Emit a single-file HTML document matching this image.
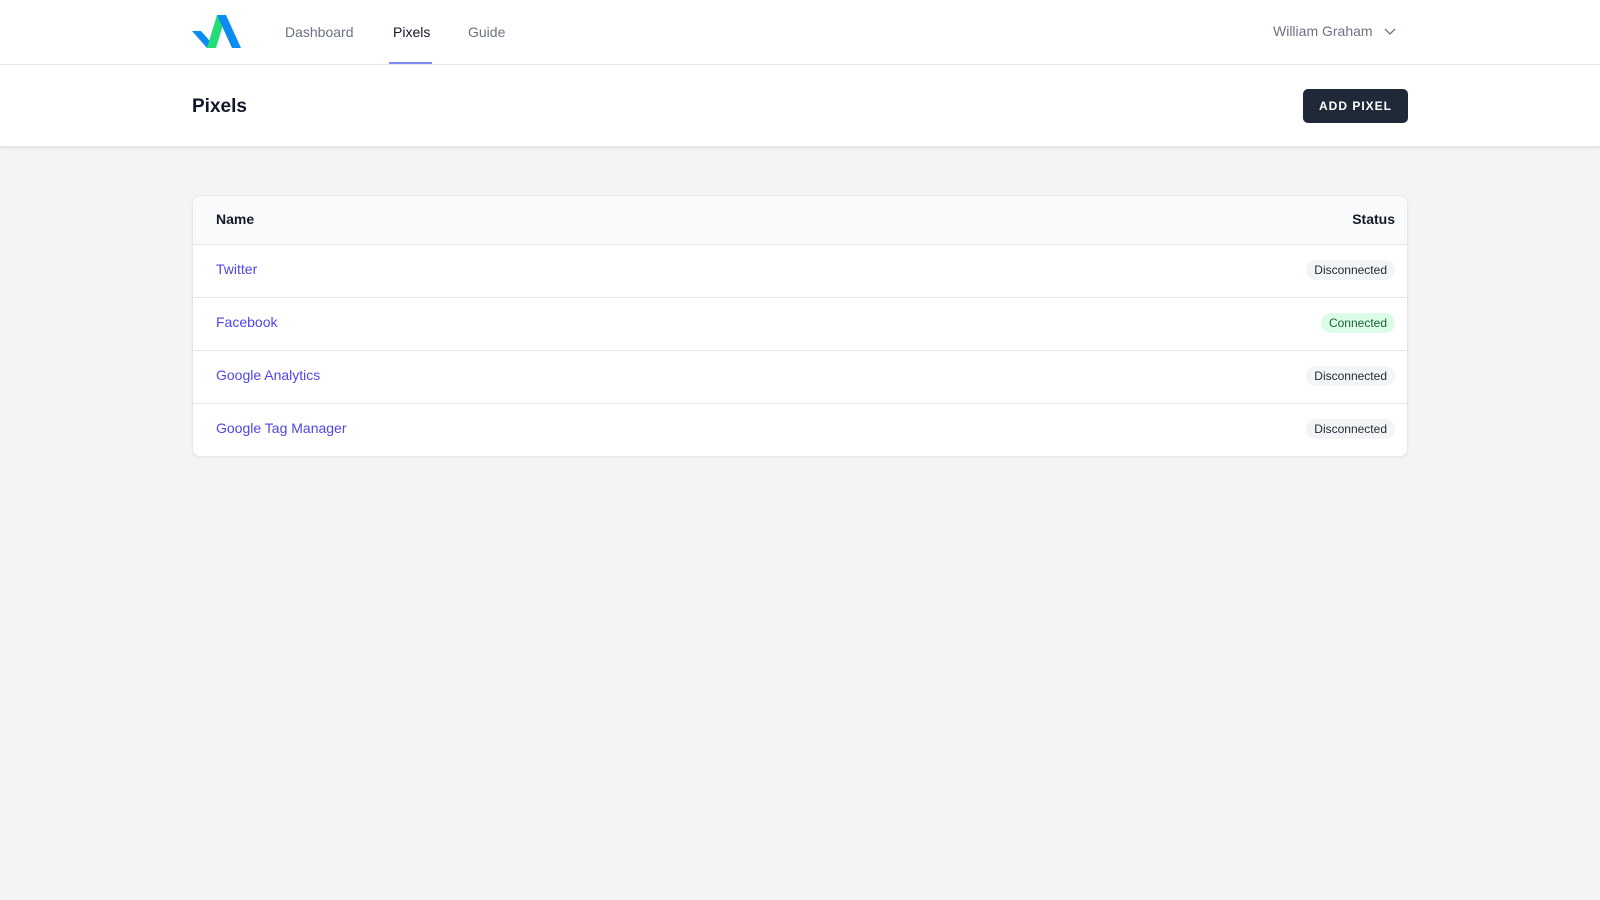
<!DOCTYPE html>
<html><head><style>
*{box-sizing:border-box;margin:0;padding:0}
body{width:1600px;height:900px;background:#f3f4f6;font-family:"Liberation Sans",sans-serif;position:relative;overflow:hidden}
.nav{position:absolute;top:0;left:0;width:1600px;height:65px;background:#fff;border-bottom:1px solid #e5e7eb}
.nav a{position:absolute;top:24px;font-size:14px;color:#6b7280;text-decoration:none}
.hdr{position:absolute;top:65px;left:0;width:1600px;height:82px;background:#fff;box-shadow:0 1px 2px rgba(0,0,0,.08);border-bottom:1px solid #e5e7eb}
.card{position:absolute;left:192px;top:195px;width:1216px;background:#fff;border:1px solid #e5e7eb;border-radius:8px;overflow:hidden;box-shadow:0 1px 2px rgba(0,0,0,.05)}
.row{height:53px;border-top:1px solid #e5e7eb;position:relative;font-size:14px}
.row .n{position:absolute;left:23px;top:16px;color:#4f46e5}
.b{position:absolute;right:12px;top:15px;font-size:12px;padding:3px 8px;border-radius:10px;background:#f3f4f6;color:#1f2937}
.g{background:#dcfce7;color:#166534}
</style></head><body>
<div class="nav">
<svg style="position:absolute;left:188px;top:10px" width="56" height="44" viewBox="0 0 56 44">
<polygon points="4,21 13,21 28,38 19,38" fill="#0a8cf0"/>
<polygon points="29,5 38,5 28,38 19,38" fill="#22dd77"/>
<polygon points="29,5 38,5 53,38 44,38" fill="#0a8cf0"/>
</svg>
<a style="left:285px">Dashboard</a>
<a style="left:393px;color:#111827">Pixels</a>
<div style="position:absolute;left:389px;top:62px;width:43px;height:2px;background:#818cf8"></div>
<a style="left:468px">Guide</a>
<a style="left:1273px;top:23px">William Graham</a>
<svg style="position:absolute;left:1384px;top:28px" width="12" height="8" viewBox="0 0 12 8"><path d="M1 1l5 5 5-5" fill="none" stroke="#6b7280" stroke-width="1.3"/></svg>
</div>
<div class="hdr">
<div style="position:absolute;left:192px;top:31px;font-size:19px;color:#111827;font-weight:bold;-webkit-text-stroke:0">Pixels</div>
<div style="position:absolute;left:1303px;top:24px;width:105px;height:34px;background:#1f2937;border-radius:5px;color:#fff;font-size:12px;font-weight:bold;letter-spacing:1px;text-align:center;line-height:34px">ADD PIXEL</div>
</div>
<div class="card">
<div style="height:48px;background:#f9fafb;position:relative;font-size:14px;color:#111827;font-weight:bold">
<span style="position:absolute;left:23px;top:15px">Name</span>
<span style="position:absolute;right:12px;top:15px">Status</span></div>
<div class="row"><span class="n">Twitter</span><span class="b">Disconnected</span></div>
<div class="row"><span class="n">Facebook</span><span class="b g">Connected</span></div>
<div class="row"><span class="n">Google Analytics</span><span class="b">Disconnected</span></div>
<div class="row"><span class="n">Google Tag Manager</span><span class="b">Disconnected</span></div>
</div>
</body></html>
